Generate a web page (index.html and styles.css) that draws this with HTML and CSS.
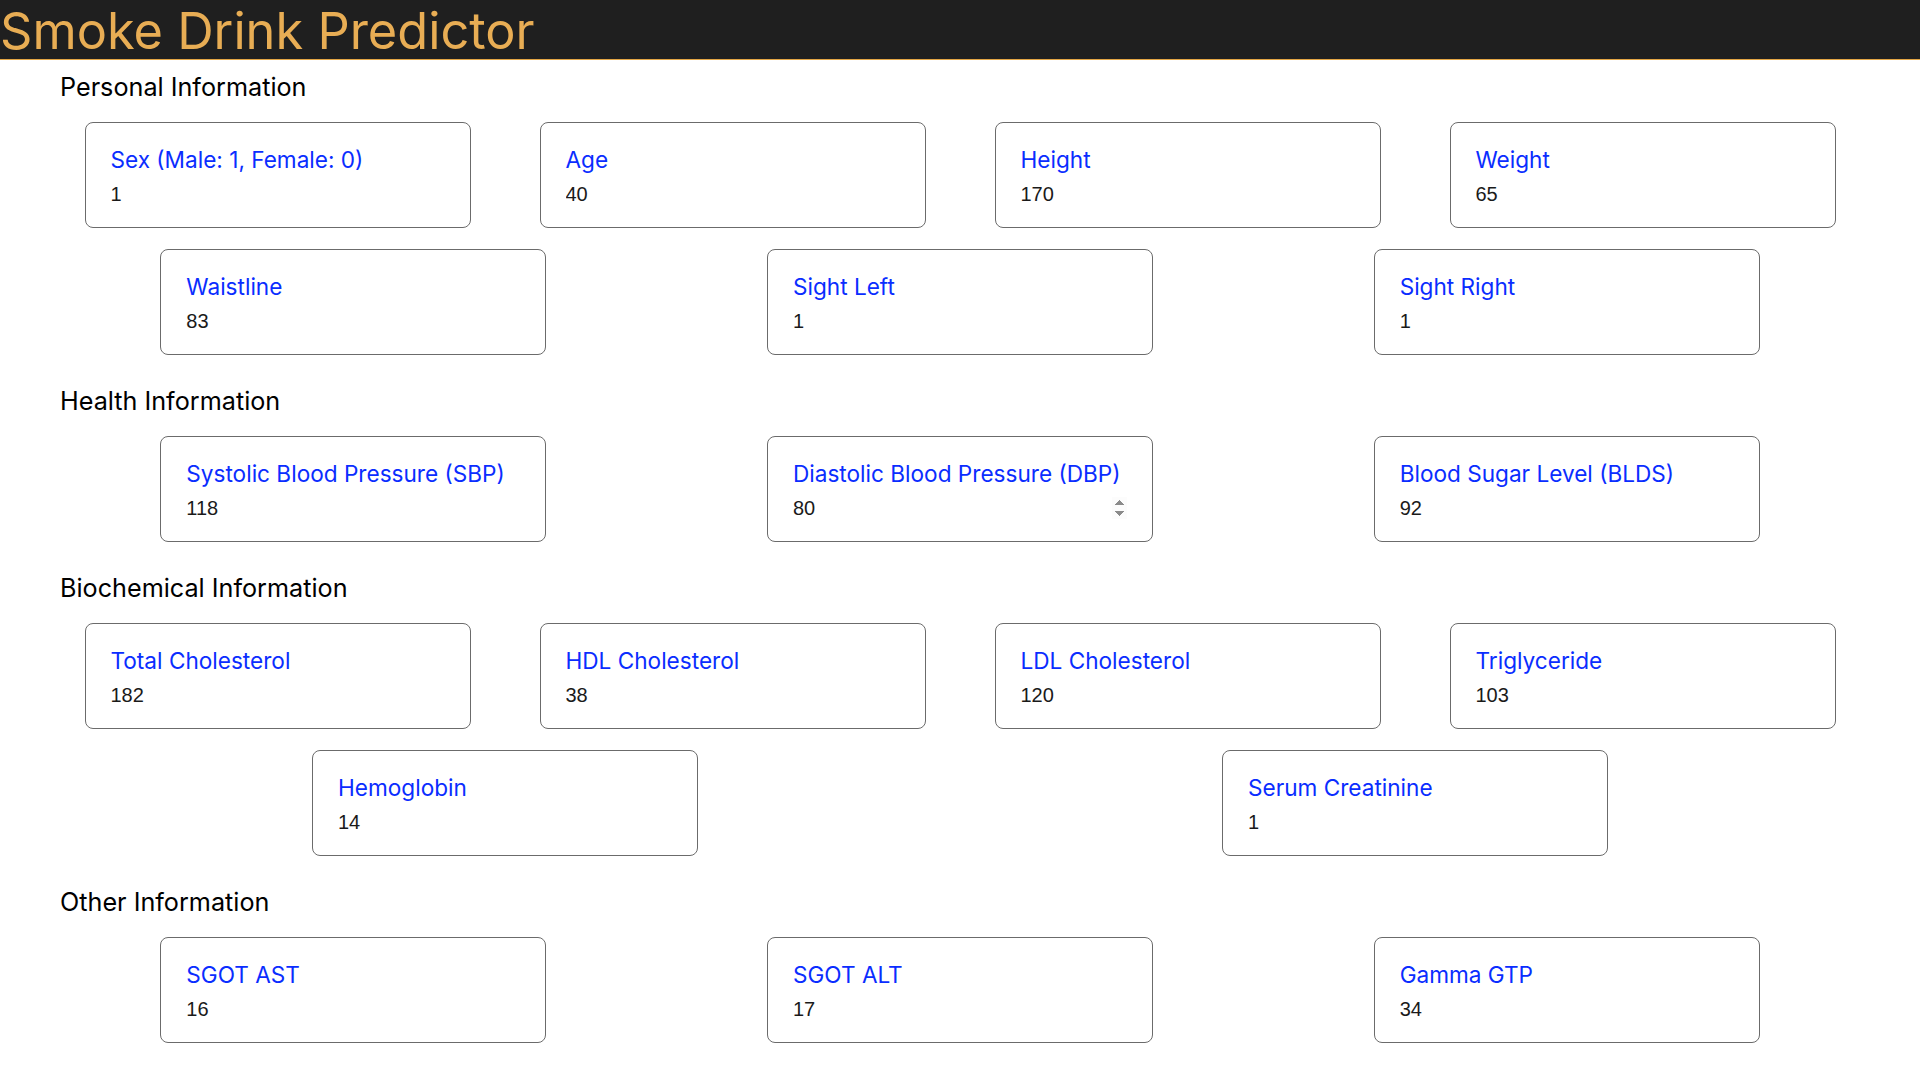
FILE: index.html
```html
<!DOCTYPE html>
<html lang="en">
<head>
<meta charset="utf-8">
<title>Smoke Drink Predictor</title>
<link rel="stylesheet" href="styles.css">
</head>
<body>
<header class="topbar">
  <h1 class="title">Smoke Drink Predictor</h1>
</header>
<main class="content">
  <section class="group">
    <h2 class="group-title">Personal Information</h2>
    <div class="fields">
      <label class="field"><span class="field-label">Sex (Male: 1, Female: 0)</span><input class="field-input" type="number" value="1"></label>
      <label class="field"><span class="field-label">Age</span><input class="field-input" type="number" value="40"></label>
      <label class="field"><span class="field-label">Height</span><input class="field-input" type="number" value="170"></label>
      <label class="field"><span class="field-label">Weight</span><input class="field-input" type="number" value="65"></label>
      <label class="field"><span class="field-label">Waistline</span><input class="field-input" type="number" value="83"></label>
      <label class="field"><span class="field-label">Sight Left</span><input class="field-input" type="number" value="1"></label>
      <label class="field"><span class="field-label">Sight Right</span><input class="field-input" type="number" value="1"></label>
    </div>
  </section>
  <section class="group">
    <h2 class="group-title">Health Information</h2>
    <div class="fields">
      <label class="field"><span class="field-label">Systolic Blood Pressure (SBP)</span><input class="field-input" type="number" value="118"></label>
      <label class="field"><span class="field-label">Diastolic Blood Pressure (DBP)</span><input class="field-input" type="number" value="80" autofocus></label>
      <label class="field"><span class="field-label">Blood Sugar Level (BLDS)</span><input class="field-input" type="number" value="92"></label>
    </div>
  </section>
  <section class="group">
    <h2 class="group-title">Biochemical Information</h2>
    <div class="fields">
      <label class="field"><span class="field-label">Total Cholesterol</span><input class="field-input" type="number" value="182"></label>
      <label class="field"><span class="field-label">HDL Cholesterol</span><input class="field-input" type="number" value="38"></label>
      <label class="field"><span class="field-label">LDL Cholesterol</span><input class="field-input" type="number" value="120"></label>
      <label class="field"><span class="field-label">Triglyceride</span><input class="field-input" type="number" value="103"></label>
      <label class="field"><span class="field-label">Hemoglobin</span><input class="field-input" type="number" value="14"></label>
      <label class="field"><span class="field-label">Serum Creatinine</span><input class="field-input" type="number" value="1"></label>
    </div>
  </section>
  <section class="group">
    <h2 class="group-title">Other Information</h2>
    <div class="fields">
      <label class="field"><span class="field-label">SGOT AST</span><input class="field-input" type="number" value="16"></label>
      <label class="field"><span class="field-label">SGOT ALT</span><input class="field-input" type="number" value="17"></label>
      <label class="field"><span class="field-label">Gamma GTP</span><input class="field-input" type="number" value="34"></label>
    </div>
  </section>
</main>
</body>
</html>
```
FILE: styles.css
```css
* { box-sizing: border-box; }

html, body {
  margin: 0;
  padding: 0;
  background: #ffffff;
}

body {
  font-family: Inter, "Noto Sans", sans-serif;
  color: #000;
}

.topbar {
  height: 60px;
  background: #1f1f1f;
  border-bottom: 1px solid #e3a645;
  display: flex;
  align-items: center;
}

.title {
  margin: 0;
  padding: 0;
  font-family: Inter, sans-serif;
  font-weight: 400;
  font-size: 50.5px;
  line-height: 58px;
  color: #e8ad54;
  position: relative;
  top: 1px;
}

.content {
  padding: 13px 50px 0;
  display: flex;
  flex-direction: column;
  gap: 21px;
}

.group-title {
  margin: 0 10px 10px;
  font-family: Inter, sans-serif;
  font-weight: 400;
  font-size: 25.2px;
  line-height: 29px;
  color: #000;
}

.fields {
  display: flex;
  flex-wrap: wrap;
  justify-content: space-around;
}

.field {
  width: 386px;
  margin: 10px 0 11px;
  padding: 23px 25px 21px;
  border: 1px solid #6b6b6b;
  border-radius: 8px;
  display: flex;
  flex-direction: column;
  background: #fff;
}

.field-label {
  font-family: Inter, sans-serif;
  font-size: 22.6px;
  line-height: 28px;
  color: #0a2dff;
  margin-bottom: 9px;
}

.field-input {
  font-family: "Liberation Sans", Arial, sans-serif;
  font-size: 20px;
  line-height: 23px;
  height: 23px;
  padding: 0;
  margin: 0;
  border: none;
  outline: none;
  background: transparent;
  color: #1a1a1a;
  width: 100%;
}

.field-input::-webkit-inner-spin-button {
  background: #efefef;
}
```
